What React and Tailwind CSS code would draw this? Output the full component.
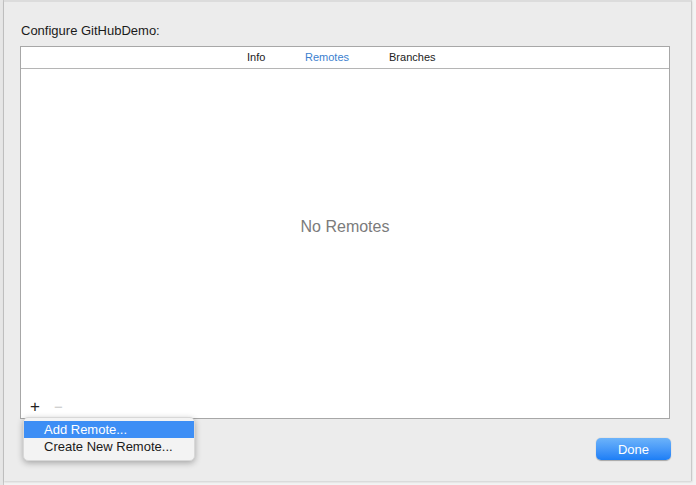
import React from "react";

export default function App() {
  return (
    <div
      className="relative w-[696px] h-[485px] overflow-hidden bg-[#f3f3f3] flex"
      style={{ fontFamily: '"Liberation Sans", Arial, sans-serif' }}
    >
      <div className="w-[4px] h-full bg-[#e6e6e6] border-r border-[#c8c8c8]" />
      <div className="w-[688px] h-[481px] bg-[#ececec] border-r border-[#c9c9c9] border-t-2 border-t-[#dcdcdc] shadow-[0_1px_2px_rgba(0,0,0,0.15)] flex flex-col">
        <div className="pl-[17px] pt-[21px] h-[44px] text-[13px] text-[#1a1a1a] leading-[16px]">
          Configure GitHubDemo:
        </div>
        <div className="ml-[16px] w-[650px] h-[373px] bg-white border border-[#a7a7a7] flex flex-col">
          <div className="h-[22px] border-b border-[#b5b5b5] flex items-center pb-[1px] text-[11px] leading-[14px] text-[#222]">
            <div className="w-[226px]" />
            <span className="w-[20px]">Info</span>
            <span className="ml-[38px] text-[#3b7fcf]">Remotes</span>
            <span className="ml-[40px]">Branches</span>
          </div>
          <div className="flex-1 relative flex items-center justify-center">
            <span className="text-[16px] text-[#7b7b7b] mb-[34px]">No Remotes</span>
            <div className="absolute left-[9px] bottom-[3px] flex items-center gap-[14px]">
              <span className="text-[17px] leading-[17px] text-[#222] font-light">+</span>
              <span className="text-[15px] leading-[15px] text-[#c8c8c8]">−</span>
            </div>
          </div>
        </div>
        <div className="flex justify-end pr-[20px] pt-[19px]">
          <button className="w-[75px] h-[22px] rounded-[5px] bg-gradient-to-b from-[#6cb3fa] to-[#1b7ef6] text-white text-[13px] leading-[16px] pt-[1px] shadow-[0_0.5px_1px_rgba(0,0,0,0.3)]">
            Done
          </button>
        </div>
      </div>
      <div className="absolute left-[23px] top-[417px] w-[172px] h-[44px] bg-[#f3f3f3] rounded-[5px] shadow-[0_2px_6px_rgba(0,0,0,0.3)] border border-[#d8d8d8] py-[3px] text-[13px] leading-[16px] text-[#1a1a1a]">
        <div className="h-[17px] bg-[#3d8ef5] text-white pl-[20px] pt-[1px]">Add Remote...</div>
        <div className="h-[17px] pl-[20px] pt-[1px]">Create New Remote...</div>
      </div>
    </div>
  );
}
